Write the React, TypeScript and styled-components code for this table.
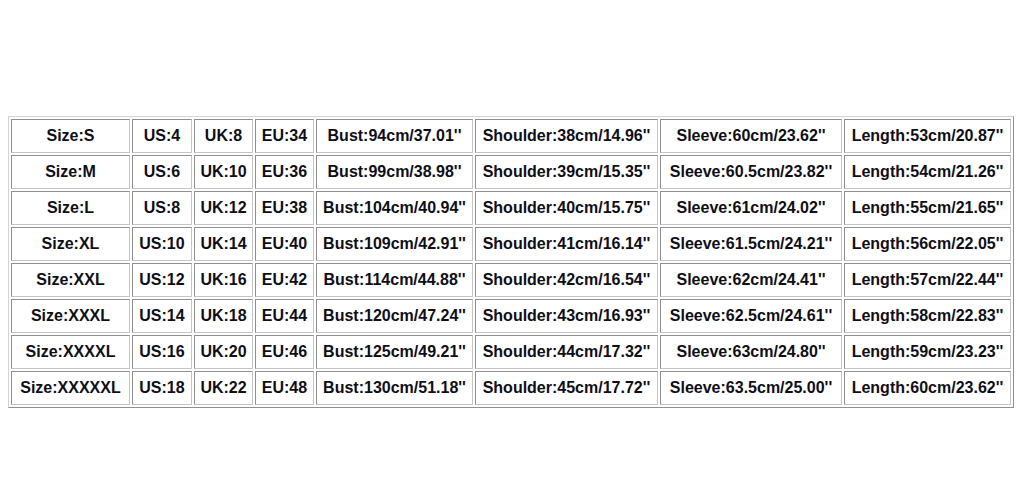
import styled, { createGlobalStyle } from 'styled-components';

const GlobalStyle = createGlobalStyle`
  html, body {
    margin: 0;
    padding: 0;
    background: #fff;
  }
`;

// widths of each column, border included
const columnWidths = [119, 60, 59, 59, 157, 183, 182, 167];

const sizeRows: string[][] = [
  ['Size:S', 'US:4', 'UK:8', 'EU:34', "Bust:94cm/37.01''", "Shoulder:38cm/14.96''", "Sleeve:60cm/23.62''", "Length:53cm/20.87''"],
  ['Size:M', 'US:6', 'UK:10', 'EU:36', "Bust:99cm/38.98''", "Shoulder:39cm/15.35''", "Sleeve:60.5cm/23.82''", "Length:54cm/21.26''"],
  ['Size:L', 'US:8', 'UK:12', 'EU:38', "Bust:104cm/40.94''", "Shoulder:40cm/15.75''", "Sleeve:61cm/24.02''", "Length:55cm/21.65''"],
  ['Size:XL', 'US:10', 'UK:14', 'EU:40', "Bust:109cm/42.91''", "Shoulder:41cm/16.14''", "Sleeve:61.5cm/24.21''", "Length:56cm/22.05''"],
  ['Size:XXL', 'US:12', 'UK:16', 'EU:42', "Bust:114cm/44.88''", "Shoulder:42cm/16.54''", "Sleeve:62cm/24.41''", "Length:57cm/22.44''"],
  ['Size:XXXL', 'US:14', 'UK:18', 'EU:44', "Bust:120cm/47.24''", "Shoulder:43cm/16.93''", "Sleeve:62.5cm/24.61''", "Length:58cm/22.83''"],
  ['Size:XXXXL', 'US:16', 'UK:20', 'EU:46', "Bust:125cm/49.21''", "Shoulder:44cm/17.32''", "Sleeve:63cm/24.80''", "Length:59cm/23.23''"],
  ['Size:XXXXXL', 'US:18', 'UK:22', 'EU:48', "Bust:130cm/51.18''", "Shoulder:45cm/17.72''", "Sleeve:63.5cm/25.00''", "Length:60cm/23.62''"],
];

const App = () => {
  return (
    <Page>
      <GlobalStyle />
      <SizeTable>
        <tbody>
          {sizeRows.map(row => (
            <Row key={row[0]}>
              {row.map((text, i) => (
                <Cell key={i} $width={columnWidths[i]}>
                  {text}
                </Cell>
              ))}
            </Row>
          ))}
        </tbody>
      </SizeTable>
    </Page>
  );
};

const Page = styled.main`
  width: 1024px;
  height: 500px;
  box-sizing: border-box;
  padding: 116px 0 0 8px;
  background: #fff;
`;

const SizeTable = styled.table`
  border-collapse: separate;
  border-spacing: 2px;
  border: 1px solid;
  border-color: #d2d2d2 #8e8e8e #8e8e8e #d2d2d2;
  font-family: 'Liberation Sans', Arial, sans-serif;
  font-size: 16px;
  font-weight: 700;
  color: #0e0e16;
`;

const Row = styled.tr`
  height: 34px;
`;

const Cell = styled.td<{ $width: number }>`
  box-sizing: border-box;
  width: ${props => props.$width}px;
  padding: 0;
  border: 1px solid;
  border-color: #8f8f8f #c4c4c4 #c4c4c4 #8f8f8f;
  text-align: center;
  vertical-align: middle;
  white-space: nowrap;
`;

export default App;
